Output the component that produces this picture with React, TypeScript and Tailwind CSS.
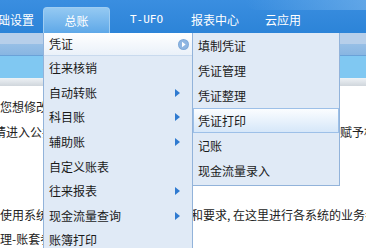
import React from "react";

const font = { fontFamily: '"Noto Sans CJK SC", "Noto Sans", sans-serif' };

function Arrow() {
  return (
    <svg width="5" height="8" viewBox="0 0 5 8" className="block">
      <path d="M0 0 L5 4 L0 8 Z" fill="#2f7ad0" />
    </svg>
  );
}

function CircleArrow() {
  return (
    <svg width="11" height="11" viewBox="0 0 11 11" className="block">
      <circle cx="5.5" cy="5.5" r="5.5" fill="#7ea9d9" />
      <circle cx="5.5" cy="5.5" r="4.5" fill="#8fb6e2" />
      <path d="M4 2.8 L7.6 5.5 L4 8.2 Z" fill="#ffffff" />
    </svg>
  );
}

const mainItems: { t: string; arrow?: boolean }[] = [
  { t: "往来核销" },
  { t: "自动转账", arrow: true },
  { t: "科目账", arrow: true },
  { t: "辅助账", arrow: true },
  { t: "自定义账表" },
  { t: "往来报表", arrow: true },
  { t: "现金流量查询", arrow: true },
  { t: "账簿打印" },
];

const subItems = ["填制凭证", "凭证管理", "凭证整理", "凭证打印", "记账", "现金流量录入"];

export default function App() {
  return (
    <div
      className="relative w-[366px] h-[248px] overflow-hidden bg-white text-[12px] text-[#1a1a1a]"
      style={font}
    >
      {/* top bar */}
      <div className="relative h-[33px] bg-gradient-to-b from-[#3a8ee0] to-[#2c84d8] flex items-end text-white text-[12px]">
        <div className="absolute right-0 top-0 w-[120px] h-[10px] bg-gradient-to-r from-transparent to-[#7ab6ec] opacity-60 rounded-bl-[60px]" />
        <div className="h-[26px] flex items-center ml-[-14px] w-[57px] whitespace-nowrap">基础设置</div>
        <div className="h-[26px] w-[67px] flex items-center justify-center rounded-t-[4px] border border-b-0 border-[#9fcdf2] bg-gradient-to-b from-[#94c9f2] to-[#5ea8e8]">
          总账
        </div>
        <div className="h-[26px] flex items-center ml-[20px] w-[61px] text-[11px]" style={{ fontFamily: '"DejaVu Sans Mono", monospace' }}>
          T-UFO
        </div>
        <div className="h-[26px] flex items-center w-[74px]">报表中心</div>
        <div className="h-[26px] flex items-center">云应用</div>
      </div>
      {/* bands */}
      <div className="h-[11px] bg-[#b7cfea]" />
      <div className="h-[12px] bg-gradient-to-b from-[#97bfe6] to-[#88b6e2] border-b border-[#6aa2d8]" />
      <div className="h-[22px] bg-[#80c8f2]" />
      <div className="h-[8px] bg-gradient-to-b from-[#eef2f6] to-[#d0d6dc]" />

      {/* content text */}
      <div className="flex flex-col pt-[12px] text-[12px] text-[#222] whitespace-nowrap">
        <div className="h-[17px] leading-[17px]">您想修改系统的权限设置</div>
        <div className="h-[17px] leading-[17px] mt-[8px] flex">
          <span className="w-[346px] shrink-0 ml-[-6px]">请进入公共平台</span>
          <span>赋予相应</span>
        </div>
        <div className="h-[17px] leading-[17px] mt-[66px] flex">
          <span className="w-[191px] shrink-0">使用系统的基本控制参数</span>
          <span>和要求, 在这里进行各系统的业务参数</span>
        </div>
        <div className="h-[17px] leading-[17px] mt-[7px]">理-账套参数</div>
      </div>

      {/* main dropdown */}
      <div className="absolute left-[43px] top-[33px] w-[150px] h-[230px] bg-[#e0eaf6] border-l border-r border-[#92b3da]">
        <div className="h-[23px] flex items-center justify-between pl-[5px] pr-[3px] bg-gradient-to-b from-white to-[#eaf1f9] border-b border-[#c9daee]">
          <span>凭证</span>
          <CircleArrow />
        </div>
        {mainItems.map((it) => (
          <div key={it.t} className="h-[24.6px] flex items-center justify-between pl-[5px] pr-[12px]">
            <span>{it.t}</span>
            {it.arrow ? <Arrow /> : null}
          </div>
        ))}
      </div>

      {/* submenu */}
      <div className="absolute left-[192px] top-[33px] w-[148px] h-[153px] bg-[#e0eaf6] border border-t-0 border-[#92b3da]">
        {subItems.map((s) => (
          <div
            key={s}
            className={
              s === "凭证打印"
                ? "h-[25px] flex items-center pl-[4px] border border-[#9dc0e8] bg-gradient-to-b from-[#fbfdff] to-[#d6e7f9]"
                : "h-[25px] flex items-center pl-[5px]"
            }
          >
            {s}
          </div>
        ))}
      </div>
    </div>
  );
}
